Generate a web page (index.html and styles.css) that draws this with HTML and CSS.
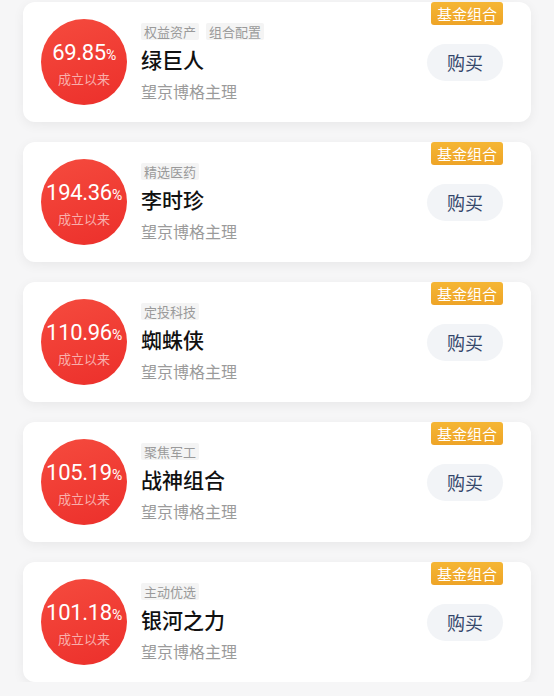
FILE: index.html
```html
<!DOCTYPE html>
<html lang="zh-CN">

<head>
    <meta charset="UTF-8">
    <meta name="viewport" content="width=device-width, initial-scale=1.0">
    <title>基金组合</title>
    <link rel="stylesheet" href="styles.css">
</head>

<body>
    <div class="list">
        <!-- 绿巨人 -->
        <div class="card">
            <span class="badge">基金组合</span>
            <div class="rate">
                <div class="num">69.85<small>%</small></div>
                <div class="since">成立以来</div>
            </div>
            <div class="info">
                <div class="tags"><span>权益资产</span><span>组合配置</span></div>
                <div class="name">绿巨人</div>
                <div class="owner">望京博格主理</div>
            </div>
            <a href="javascript:;" class="buy">购买</a>
        </div>
        <!-- 李时珍 -->
        <div class="card">
            <span class="badge">基金组合</span>
            <div class="rate">
                <div class="num">194.36<small>%</small></div>
                <div class="since">成立以来</div>
            </div>
            <div class="info">
                <div class="tags"><span>精选医药</span></div>
                <div class="name">李时珍</div>
                <div class="owner">望京博格主理</div>
            </div>
            <a href="javascript:;" class="buy">购买</a>
        </div>
        <!-- 蜘蛛侠 -->
        <div class="card">
            <span class="badge">基金组合</span>
            <div class="rate">
                <div class="num">110.96<small>%</small></div>
                <div class="since">成立以来</div>
            </div>
            <div class="info">
                <div class="tags"><span>定投科技</span></div>
                <div class="name">蜘蛛侠</div>
                <div class="owner">望京博格主理</div>
            </div>
            <a href="javascript:;" class="buy">购买</a>
        </div>
        <!-- 战神组合 -->
        <div class="card">
            <span class="badge">基金组合</span>
            <div class="rate">
                <div class="num">105.19<small>%</small></div>
                <div class="since">成立以来</div>
            </div>
            <div class="info">
                <div class="tags"><span>聚焦军工</span></div>
                <div class="name">战神组合</div>
                <div class="owner">望京博格主理</div>
            </div>
            <a href="javascript:;" class="buy">购买</a>
        </div>
        <!-- 银河之力 -->
        <div class="card">
            <span class="badge">基金组合</span>
            <div class="rate">
                <div class="num">101.18<small>%</small></div>
                <div class="since">成立以来</div>
            </div>
            <div class="info">
                <div class="tags"><span>主动优选</span></div>
                <div class="name">银河之力</div>
                <div class="owner">望京博格主理</div>
            </div>
            <a href="javascript:;" class="buy">购买</a>
        </div>
    </div>
</body>

</html>
```

FILE: styles.css
```css
* {
    margin: 0;
    padding: 0;
    box-sizing: border-box;
}

body {
    background-color: #f6f6f7;
    font-family: "Noto Sans CJK SC", "Noto Sans", sans-serif;
}

.list {
    display: flex;
    flex-direction: column;
    gap: 20px;
    padding: 2px 0 0 23px;
}

.card {
    position: relative;
    display: flex;
    align-items: center;
    width: 508px;
    height: 120px;
    padding-left: 18px;
    background-color: #fff;
    border-radius: 12px;
    box-shadow: 0 3px 12px rgba(0, 0, 0, .06);
}

/* 右上角标签 */
.badge {
    position: absolute;
    top: 0;
    right: 28px;
    width: 72px;
    height: 23px;
    line-height: 23px;
    text-align: center;
    font-size: 15px;
    color: #fff;
    background: linear-gradient(180deg, #f5b634, #eea427);
    border-radius: 3px;
}

/* 红色收益圆 */
.rate {
    flex: none;
    display: flex;
    flex-direction: column;
    align-items: center;
    justify-content: center;
    width: 86px;
    height: 86px;
    padding-top: 4px;
    border-radius: 50%;
    background: linear-gradient(160deg, #f54b3e, #ec2f2b);
    color: #fff;
}

.rate .num {
    font-family: Roboto, "Liberation Sans", sans-serif;
    font-size: 22px;
    line-height: 24px;
    white-space: nowrap;
    letter-spacing: -0.3px;
}

.rate .num small {
    font-size: 14px;
}

.rate .since {
    margin-top: 4px;
    font-size: 13px;
    line-height: 16px;
    color: rgba(255, 255, 255, .6);
}

.info {
    flex: 1;
    margin-left: 14px;
}

.tags {
    display: flex;
    gap: 7px;
}

.tags span {
    height: 17px;
    line-height: 17px;
    padding: 0 3px;
    font-size: 13px;
    color: #9a9a9a;
    background-color: #f4f4f4;
    border-radius: 2px;
}

.name {
    margin-top: 6px;
    font-size: 21px;
    font-weight: 500;
    line-height: 26px;
    color: #111;
}

.owner {
    margin-top: 9px;
    font-size: 16px;
    line-height: 20px;
    color: #9b9b9b;
}

.buy {
    flex: none;
    width: 76px;
    height: 37px;
    margin-right: 28px;
    line-height: 37px;
    text-align: center;
    font-size: 18px;
    color: #34466a;
    text-decoration: none;
    background-color: #f2f4f7;
    border-radius: 19px;
}
```
